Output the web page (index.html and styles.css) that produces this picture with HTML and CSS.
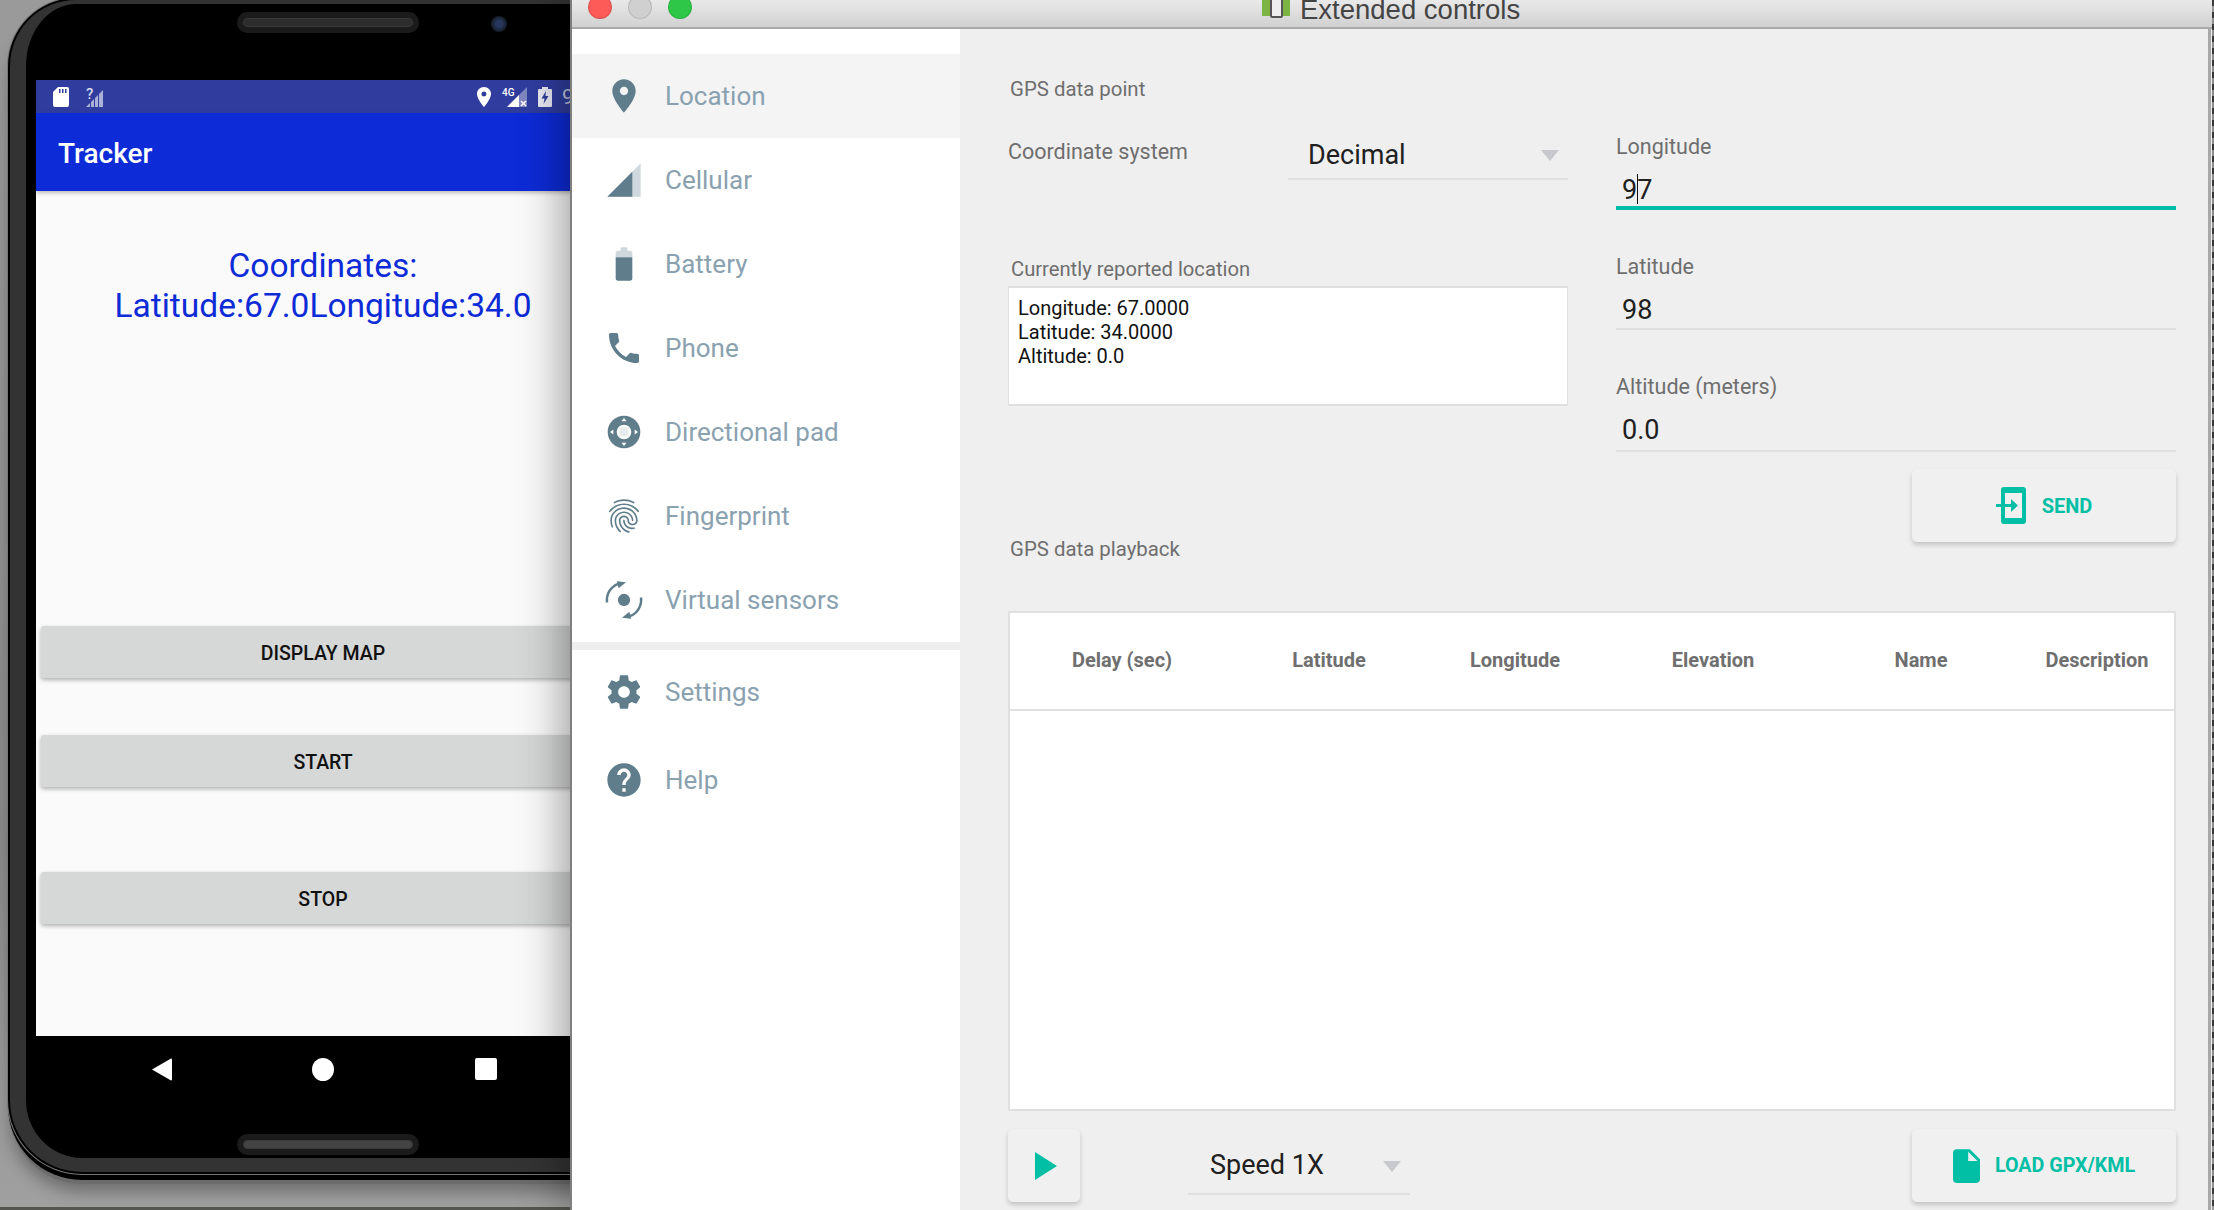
FILE: index.html
```html
<!DOCTYPE html>
<html lang="en">
<head>
  <meta charset="UTF-8">
  <title>Extended controls</title>
  <link rel="stylesheet" href="styles.css">
</head>
<body>
  <!-- Emulator phone, cut off by the controls window -->
  <section class="phone">
    <div class="phone-body">
      <div class="phone-top">
        <div class="speaker"><span></span></div>
        <div class="camera"></div>
      </div>
      <div class="screen">
        <div class="status-bar">
          <svg class="st-sd" viewBox="0 0 16 20"><path fill="#fff" d="M5 0h9a2 2 0 0 1 2 2v16a2 2 0 0 1-2 2H2a2 2 0 0 1-2-2V5z"/><path fill="#303d9e" d="M6 2h1.500v4H6zM9 2h1.500v4H9zM12 2h1.500v4H12z"/></svg>
          <svg class="st-signal" viewBox="0 0 18 20">
            <path fill="#aab1d8" d="M0 20l4-4v4zM5 20v-5l3-3v8zM9 20V11l3-3v12zM13 20V7l4-4v17z"/>
            <text x="0" y="12" class="st-q">?</text>
          </svg>
          <div class="status-right">
            <svg class="st-pin" viewBox="0 0 14 20"><path fill="#fff" d="M7 0C3 0 0 3 0 7c0 5 7 13 7 13s7-8 7-13c0-4-3-7-7-7zm0 9.500A2.500 2.500 0 1 1 7 4.500a2.500 2.500 0 0 1 0 5z"/></svg>
            <svg class="st-4g" viewBox="0 0 25 20">
              <path fill="#8087c0" d="M5 20L25 0v20z"/>
              <path fill="#fff" d="M5 20L17 8v12z"/>
              <path stroke="#fff" stroke-width="1.500" d="M19 14l5 5M24 14l-5 5"/>
              <text x="0" y="9" class="st-4g-text">4G</text>
            </svg>
            <svg class="st-bat" viewBox="0 0 14 20"><path fill="#e8e9f3" d="M4 0h6v2h3a1 1 0 0 1 1 1v16a1 1 0 0 1-1 1H1a1 1 0 0 1-1-1V3a1 1 0 0 1 1-1h3z"/><path fill="#303d9e" d="M8 4L3.500 11.500H6.500L5.500 17 10.500 9H7.500z"/></svg>
            <span class="st-level">9</span>
          </div>
        </div>
        <header class="app-bar">Tracker</header>
        <div class="app-content">
          <p class="coords">Coordinates:<br>Latitude:67.0Longitude:34.0</p>
          <button class="app-btn app-btn-map">DISPLAY MAP</button>
          <button class="app-btn app-btn-start">START</button>
          <button class="app-btn app-btn-stop">STOP</button>
        </div>
      </div>
      <div class="nav-bar">
        <svg class="nav-back" viewBox="0 0 20 23"><path fill="#fff" d="M19 0.500a1 1 0 0 1 1 1v20a1 1 0 0 1-1 1L0 11.500z"/></svg>
        <div class="nav-home"></div>
        <div class="nav-recent"></div>
      </div>
      <div class="speaker speaker-bottom"><span></span></div>
    </div>
    <div class="desk-strip"></div>
  </section>

  <!-- Extended controls window -->
  <section class="window">
    <div class="titlebar">
      <span class="light light-red"></span>
      <span class="light light-gray"></span>
      <span class="light light-green"></span>
      <span class="title-icon"><span></span></span>
      <span class="title-text">Extended controls</span>
    </div>

    <div class="window-body">
      <nav class="sidebar">
        <a class="side-item active">
          <svg viewBox="0 0 24 24"><path d="M12 2C8.130 2 5 5.130 5 9c0 5.250 7 13 7 13s7-7.750 7-13c0-3.870-3.130-7-7-7zm0 9.500c-1.380 0-2.500-1.120-2.500-2.500s1.120-2.500 2.500-2.500 2.500 1.120 2.500 2.500-1.120 2.500-2.500 2.500z"/></svg>
          Location
        </a>
        <a class="side-item">
          <svg viewBox="0 0 24 24"><path fill-opacity=".3" d="M2 22h20V2z"/><path d="M17 7L2 22h15z"/></svg>
          Cellular
        </a>
        <a class="side-item">
          <svg viewBox="0 0 24 24"><path fill-opacity=".3" d="M17 5.330C17 4.600 16.400 4 15.670 4H14V2h-4v2H8.330C7.600 4 7 4.600 7 5.330V8h10V5.330z"/><path d="M7 8v12.670C7 21.400 7.600 22 8.330 22h7.330c.74 0 1.340-.6 1.340-1.330V8H7z"/></svg>
          Battery
        </a>
        <a class="side-item">
          <svg viewBox="0 0 24 24"><path d="M6.620 10.790c1.440 2.830 3.760 5.140 6.590 6.590l2.200-2.200c.27-.27.67-.36 1.020-.24 1.120.37 2.330.57 3.570.57.55 0 1 .45 1 1V20c0 .55-.45 1-1 1-9.390 0-17-7.610-17-17 0-.55.45-1 1-1h3.500c.55 0 1 .45 1 1 0 1.250.2 2.450.57 3.570.11.35.03.74-.25 1.020l-2.200 2.200z"/></svg>
          Phone
        </a>
        <a class="side-item">
          <svg viewBox="0 0 24 24"><circle cx="12" cy="12" r="9.800"/><circle cx="12" cy="12" r="3.600" fill="#e6ebee" stroke="#fff" stroke-width="1.600"/><path fill="#fff" d="M12 3.600l1.500 2h-3zM12 20.400l-1.500-2h3zM3.600 12l2-1.500v3zM20.400 12l-2 1.500v-3z"/></svg>
          Directional pad
        </a>
        <a class="side-item">
          <svg viewBox="0 0 24 24"><path d="M17.810 4.470c-.08 0-.16-.02-.23-.06C15.660 3.420 14 3 12.010 3c-1.980 0-3.860.47-5.570 1.410-.24.13-.54.04-.68-.2-.13-.24-.04-.55.2-.68C7.820 2.520 9.860 2 12.010 2c2.130 0 3.990.47 6.030 1.520.25.13.34.43.21.67-.09.18-.26.28-.44.28zM3.500 9.720c-.1 0-.2-.03-.29-.09-.23-.16-.28-.47-.12-.7.99-1.400 2.250-2.500 3.750-3.270C9.980 4.040 14 4.030 17.150 5.650c1.500.77 2.760 1.860 3.750 3.250.16.22.11.54-.12.7-.23.16-.54.11-.7-.12-.9-1.260-2.040-2.250-3.390-2.940-2.870-1.470-6.540-1.470-9.400.01-1.360.7-2.500 1.700-3.400 2.960-.08.14-.23.21-.39.21zm6.250 12.070c-.13 0-.26-.05-.35-.15-.87-.87-1.340-1.430-2.010-2.640-.69-1.230-1.050-2.730-1.050-4.340 0-2.970 2.540-5.390 5.660-5.390s5.660 2.420 5.660 5.390c0 .28-.22.5-.5.5s-.5-.22-.5-.5c0-2.420-2.090-4.390-4.660-4.390-2.570 0-4.660 1.970-4.660 4.390 0 1.440.32 2.770.93 3.850.64 1.150 1.080 1.640 1.850 2.420.19.2.19.51 0 .71-.11.1-.24.15-.37.15zm7.170-1.850c-1.190 0-2.240-.3-3.100-.89-1.490-1.010-2.380-2.650-2.380-4.390 0-.28.22-.5.5-.5s.5.22.5.5c0 1.410.72 2.740 1.940 3.560.71.48 1.540.71 2.540.71.24 0 .64-.03 1.040-.1.27-.05.53.13.58.41.05.27-.13.53-.41.58-.57.11-1.070.12-1.210.12zM14.910 22c-.04 0-.09-.01-.13-.02-1.590-.44-2.630-1.030-3.720-2.100-1.400-1.390-2.170-3.240-2.170-5.220 0-1.620 1.380-2.940 3.080-2.940 1.700 0 3.080 1.320 3.080 2.940 0 1.070.93 1.940 2.080 1.940s2.080-.87 2.080-1.940c0-3.770-3.250-6.830-7.250-6.830-2.840 0-5.440 1.580-6.610 4.030-.39.81-.59 1.760-.59 2.800 0 .78.07 2.010.67 3.610.1.26-.03.55-.29.64-.26.1-.55-.04-.64-.29-.49-1.310-.73-2.610-.73-3.960 0-1.200.23-2.290.68-3.240 1.330-2.790 4.280-4.600 7.510-4.600 4.550 0 8.250 3.510 8.250 7.830 0 1.620-1.380 2.940-3.080 2.940s-3.080-1.320-3.080-2.940c0-1.070-.93-1.940-2.080-1.940s-2.080.87-2.080 1.940c0 1.710.66 3.310 1.870 4.510.95.94 1.860 1.460 3.270 1.850.27.07.42.35.35.61-.05.23-.26.38-.47.38z"/></svg>
          Fingerprint
        </a>
        <a class="side-item">
          <svg viewBox="0 0 24 24">
            <circle cx="12" cy="12" r="3.700"/>
            <path fill="none" stroke="#607d8b" stroke-width="1.500" d="M1.800 13.500A10.500 10.500 0 0 1 8.500 2.300"/>
            <path d="M7.600 0.800L13.200 1.400 8.800 5z"/>
            <path fill="none" stroke="#607d8b" stroke-width="1.500" d="M22.200 10.500A10.500 10.500 0 0 1 15.500 21.700"/>
            <path d="M16.400 23.200L10.800 22.600 15.200 19z"/>
          </svg>
          Virtual sensors
        </a>
        <div class="side-divider"></div>
        <a class="side-item">
          <svg viewBox="0 0 24 24"><path d="M19.430 12.980c.04-.32.07-.64.07-.98s-.03-.66-.07-.98l2.110-1.650c.19-.15.24-.42.12-.64l-2-3.460c-.12-.22-.39-.3-.61-.22l-2.490 1c-.52-.4-1.080-.73-1.690-.98l-.38-2.650C14.460 2.180 14.250 2 14 2h-4c-.25 0-.46.18-.49.42l-.38 2.650c-.61.25-1.170.59-1.690.98l-2.490-1c-.23-.09-.49 0-.61.22l-2 3.460c-.13.22-.07.49.12.64l2.110 1.650c-.04.32-.07.65-.07.98s.03.66.07.98l-2.110 1.650c-.19.15-.24.42-.12.64l2 3.460c.12.22.39.3.61.22l2.490-1c.52.4 1.080.73 1.690.98l.38 2.650c.03.24.24.42.49.42h4c.25 0 .46-.18.49-.42l.38-2.650c.61-.25 1.170-.59 1.690-.98l2.490 1c.23.09.49 0 .61-.22l2-3.460c.12-.22.07-.49-.12-.64l-2.110-1.650zM12 15.500c-1.930 0-3.500-1.570-3.500-3.500s1.570-3.500 3.500-3.500 3.500 1.570 3.500 3.500-1.570 3.500-3.500 3.500z"/></svg>
          Settings
        </a>
        <a class="side-item side-help">
          <svg viewBox="0 0 24 24"><path d="M12 2C6.480 2 2 6.480 2 12s4.480 10 10 10 10-4.480 10-10S17.520 2 12 2zm1 17h-2v-2h2v2zm2.070-7.750l-.9.92C13.450 12.900 13 13.500 13 15h-2v-.5c0-1.100.45-2.100 1.170-2.830l1.240-1.260c.37-.36.59-.86.59-1.410 0-1.100-.9-2-2-2s-2 .9-2 2H8c0-2.210 1.790-4 4-4s4 1.790 4 4c0 .88-.36 1.680-.93 2.250z"/></svg>
          Help
        </a>
      </nav>

      <main class="panel">
        <h2 class="section-title">GPS data point</h2>

        <div class="gps-point">
          <div class="gps-left">
            <div class="coord-row">
              <label class="coord-label">Coordinate system</label>
              <div class="select coord-select">Decimal<span class="caret"></span></div>
            </div>
            <h3 class="report-title">Currently reported location</h3>
            <div class="report-box">
              Longitude: 67.0000<br>
              Latitude: 34.0000<br>
              Altitude: 0.0
            </div>
          </div>

          <div class="gps-right">
            <div class="field">
              <label>Longitude</label>
              <div class="field-value focused">9<span class="text-cursor"></span>7</div>
            </div>
            <div class="field">
              <label>Latitude</label>
              <div class="field-value">98</div>
            </div>
            <div class="field">
              <label>Altitude (meters)</label>
              <div class="field-value field-value-tall">0.0</div>
            </div>
            <button class="flat-btn send-btn">
              <svg class="send-icon" viewBox="0 0 30 37">
                <path fill="#00bfa5" fill-rule="evenodd" d="M8 0h19a3 3 0 0 1 3 3v31a3 3 0 0 1-3 3H8a3 3 0 0 1-3-3V3a3 3 0 0 1 3-3zm1 6v25h17V6z"/>
                <path fill="#00bfa5" d="M0 17h15v-5l7 6.500-7 6.500v-5H0z"/>
              </svg>
              SEND
            </button>
          </div>
        </div>

        <h2 class="section-title playback-title">GPS data playback</h2>

        <div class="track-table">
          <div class="track-head">
            <span>Delay (sec)</span>
            <span>Latitude</span>
            <span>Longitude</span>
            <span>Elevation</span>
            <span>Name</span>
            <span>Description</span>
          </div>
        </div>

        <div class="playback-bar">
          <button class="flat-btn play-btn">
            <svg class="play-icon" viewBox="0 0 22 28"><path fill="#00bfa5" d="M0 0l22 14L0 28z"/></svg>
          </button>
          <div class="select speed-select">Speed 1X<span class="caret"></span></div>
          <button class="flat-btn load-btn">
            <svg class="file-icon" viewBox="4 2 16 20"><path fill="#00bfa5" d="M6 2c-1.100 0-1.990.9-1.990 2L4 20c0 1.100.89 2 1.990 2H18c1.100 0 2-.9 2-2V8l-6-6H6zm7 7V3.500L18.500 9H13z"/></svg>
            LOAD GPX/KML
          </button>
        </div>
      </main>
    </div>
  </section>

  <div class="desk-edge"></div>
</body>
</html>
```

FILE: styles.css
```css
/* Reset */
*, *::before, *::after {
  margin: 0;
  padding: 0;
  box-sizing: border-box;
}

body {
  display: flex;
  width: 2214px;
  height: 1210px;
  overflow: hidden;
  font-family: Roboto, sans-serif;
  background: #8c8c8c;
}

/* Phone */
.phone {
  position: relative;
  width: 570px;
  height: 1210px;
  flex: none;
  overflow: hidden;
  padding-left: 10px;
  background: linear-gradient(#9a9a9a, #8a8a8a 70%, #a0a0a0);
}

.phone-body {
  width: 630px;
  height: 1172px;
  background: #000;
  border-style: solid;
  border-color: #333;
  border-width: 4px 16px 14px 16px;
  border-radius: 66px 66px 72px 72px;
  padding-left: 10px;
  box-shadow: 0 0 0 2px #000, 0 0 0 3px #777, 0 6px 0 2px #000, 0 12px 0 0 #6c6c6c, 0 20px 16px rgba(0, 0, 0, 0.3);
}

.phone-top {
  display: flex;
  height: 76px;
  padding: 8px 0 0 201px;
}

.speaker {
  width: 182px;
  height: 21px;
  padding: 6px;
  background: #1b1b1b;
  border-radius: 11px;
}

.speaker span {
  display: block;
  height: 9px;
  background: #2c2c2c;
  border: 1px solid #3a3a3a;
  border-radius: 5px;
}

.speaker-bottom {
  margin: 32px 0 0 201px;
}

.speaker-bottom span {
  background: #444;
}

.camera {
  width: 16px;
  height: 16px;
  margin: 4px 0 0 72px;
  border-radius: 50%;
  background: radial-gradient(circle, #25375a 30%, #141a24 70%);
}

.screen {
  width: 574px;
  height: 956px;
  display: flex;
  flex-direction: column;
  background: #fafafa;
}

.status-bar {
  height: 33px;
  flex: none;
  display: flex;
  align-items: center;
  padding: 0 0 0 17px;
  background: #303d9e;
}

.st-sd {
  width: 16px;
  height: 20px;
}

.st-signal {
  width: 18px;
  height: 20px;
  margin-left: 17px;
  overflow: visible;
}

.st-q {
  font-size: 15px;
  font-weight: 500;
  fill: #d5d8ec;
}

.status-right {
  display: flex;
  align-items: center;
  margin-left: 373px;
}

.st-pin {
  width: 14px;
  height: 20px;
}

.st-4g {
  width: 25px;
  height: 20px;
  margin-left: 11px;
  overflow: visible;
}

.st-4g-text {
  font-size: 10px;
  font-weight: 500;
  fill: #fff;
}

.st-bat {
  width: 14px;
  height: 20px;
  margin-left: 11px;
}

.st-level {
  margin-left: 10px;
  color: #c6cae4;
  font-size: 21px;
}

.app-bar {
  height: 78px;
  flex: none;
  padding: 25px 0 0 22px;
  background: #0d2bd6;
  color: #fff;
  font-size: 28px;
  line-height: 32px;
  font-weight: 500;
  box-shadow: 0 2px 4px rgba(0, 0, 0, 0.25);
}

.app-content {
  flex: 1;
  display: flex;
  flex-direction: column;
  padding: 55px 5px 0;
}

.coords {
  color: #0d2bd6;
  font-size: 33.500px;
  line-height: 40px;
  text-align: center;
}

.app-btn {
  height: 52px;
  flex: none;
  padding-top: 2px;
  border: none;
  border-radius: 3px;
  background: #d6d7d7;
  color: #111;
  font-family: Roboto, sans-serif;
  font-size: 19.500px;
  font-weight: 500;
  box-shadow: 0 2px 4px rgba(0, 0, 0, 0.3);
}

.app-btn-map {
  margin-top: 300px;
}

.app-btn-start {
  margin-top: 57px;
}

.app-btn-stop {
  margin-top: 85px;
}

.nav-bar {
  width: 574px;
  height: 66px;
  display: flex;
  align-items: center;
  padding-left: 116px;
}

.nav-back {
  width: 20px;
  height: 23px;
}

.nav-home {
  width: 22px;
  height: 23px;
  margin-left: 140px;
  background: #fff;
  border-radius: 50%;
}

.nav-recent {
  width: 22px;
  height: 22px;
  margin-left: 141px;
  background: #fff;
  border-radius: 2px;
}

/* sits on top of the phone at the very bottom of the desktop */
.desk-strip {
  position: absolute;
  left: 0;
  right: 0;
  bottom: 0;
  height: 3px;
  background: #565650;
}

/* Window */
.window {
  position: relative;
  z-index: 1;
  width: 1642px;
  flex: none;
  display: flex;
  flex-direction: column;
  border-left: 2px solid #7f7f7f;
  box-shadow: -4px 0 44px rgba(0, 0, 0, 0.42);
}

.titlebar {
  height: 29px;
  flex: none;
  display: flex;
  align-items: center;
  overflow: hidden;
  padding: 0 0 13px 16px;
  background: linear-gradient(#e9e9e9, #d1d1d1);
  border-bottom: 2px solid #a9a9a9;
}

.light {
  width: 24px;
  height: 24px;
  flex: none;
  margin-right: 16px;
  border-radius: 50%;
  border: 1px solid rgba(0, 0, 0, 0.12);
}

.light-red {
  background: #fc5b57;
}

.light-gray {
  background: #d0d0d0;
}

.light-green {
  background: #2fc748;
}

.title-icon {
  display: flex;
  justify-content: center;
  width: 28px;
  height: 18px;
  flex: none;
  margin: 0 0 0 554px;
  background: #7cb342;
}

.title-icon span {
  width: 13px;
  height: 20px;
  background: #eee;
  border: 2px solid #555;
  border-radius: 2px;
}

.title-text {
  margin: 6px 0 0 10px;
  color: #444;
  font-family: "Liberation Sans", sans-serif;
  font-size: 27.500px;
  white-space: nowrap;
}

.window-body {
  flex: 1;
  display: flex;
  padding-right: 1px;
  background: #eee;
}

/* Sidebar */
.sidebar {
  width: 388px;
  flex: none;
  padding-top: 25px;
  background: #fff;
}

.side-item {
  height: 84px;
  display: flex;
  align-items: center;
  gap: 21px;
  padding-left: 32px;
  color: #8aa1b0;
  font-size: 26px;
}

.side-item svg {
  width: 40px;
  height: 40px;
  flex: none;
  fill: #607d8b;
}

.side-item.active {
  background: #f4f4f4;
}

.side-help {
  margin-top: 4px;
}

.side-divider {
  height: 8px;
  background: #eee;
}

/* Main panel */
.panel {
  width: 1248px;
  flex: none;
  padding: 45px 32px 0 48px;
  background: #efefef;
  box-shadow: 3px 0 0 #a8a8a8;
}

.section-title {
  padding-left: 2px;
  color: #6e6e6e;
  font-size: 20.400px;
  font-weight: 400;
  line-height: 30px;
}

.gps-point {
  display: grid;
  grid-template-columns: 560px 560px;
  column-gap: 48px;
  margin-top: 28px;
}

.coord-row {
  display: flex;
  height: 48px;
}

.coord-label {
  width: 280px;
  color: #6e6e6e;
  font-size: 21.500px;
  line-height: 40px;
}

.select {
  position: relative;
  border-bottom: 2px solid #e0e0e0;
  color: #202020;
  font-size: 27px;
}

.caret {
  position: absolute;
  border-left: 9px solid transparent;
  border-right: 9px solid transparent;
  border-top: 11px solid #c6c8cb;
}

.coord-select {
  width: 280px;
  padding-left: 20px;
  line-height: 46px;
}

.coord-select .caret {
  right: 9px;
  top: 18px;
}

.report-title {
  margin-top: 74px;
  padding-left: 3px;
  color: #6e6e6e;
  font-size: 20.200px;
  font-weight: 400;
  line-height: 30px;
}

.report-box {
  height: 120px;
  margin-top: 2px;
  padding: 8px 0 0 9px;
  background: #fff;
  border: 1px solid #e0e0e0;
  border-width: 2px 1px;
  color: #111;
  font-size: 20px;
  line-height: 24px;
}

.field label {
  display: block;
  color: #6e6e6e;
  font-size: 21.500px;
  line-height: 30px;
}

.field + .field {
  margin-top: 42px;
}

.field-value {
  height: 38px;
  margin-top: 10px;
  padding-left: 6px;
  border-bottom: 2px solid #e0e0e0;
  color: #202020;
  font-size: 27px;
  line-height: 37px;
}

.field-value.focused {
  border-bottom: 4px solid #00bfa5;
}

.field-value-tall {
  height: 40px;
}

.text-cursor {
  display: inline-block;
  width: 1px;
  height: 30px;
  margin-right: -1px;
  vertical-align: -5px;
  background: #111;
}

.flat-btn {
  display: flex;
  align-items: center;
  justify-content: center;
  height: 73px;
  flex: none;
  border: none;
  border-radius: 5px;
  background: #f0f0f0;
  color: #00bfa5;
  font-family: Roboto, sans-serif;
  font-size: 20px;
  font-weight: 700;
  box-shadow: 0 3px 5px rgba(0, 0, 0, 0.18);
}

.send-btn {
  width: 264px;
  gap: 16px;
  margin: 17px 0 0 296px;
}

.send-icon {
  width: 30px;
  height: 37px;
}

.playback-title {
  line-height: 14px;
}

.track-table {
  height: 500px;
  margin-top: 55px;
  background: #fff;
  border: 2px solid #e0e0e0;
}

.track-head {
  display: grid;
  grid-template-columns: 224px 190px 182px 214px 202px 150px;
  align-items: center;
  height: 98px;
  padding-bottom: 2px;
  border-bottom: 2px solid #e0e0e0;
  color: #6f6f6f;
  font-size: 20px;
  font-weight: 700;
  text-align: center;
}

.playback-bar {
  display: flex;
  align-items: flex-start;
  margin-top: 18px;
}

.play-btn {
  width: 72px;
  padding-left: 3px;
}

.play-icon {
  width: 22px;
  height: 28px;
}

.speed-select {
  width: 222px;
  height: 66px;
  margin-left: 108px;
  padding: 18px 0 0 22px;
  line-height: 36px;
}

.speed-select .caret {
  right: 9px;
  top: 32px;
}

.load-btn {
  width: 264px;
  gap: 15px;
  margin-left: auto;
  font-size: 19.700px;
}

.file-icon {
  width: 27px;
  height: 34px;
}

.desk-edge {
  width: 2px;
  flex: none;
  background: repeating-linear-gradient(#444 0 6px, #aaa 6px 12px);
}
```
